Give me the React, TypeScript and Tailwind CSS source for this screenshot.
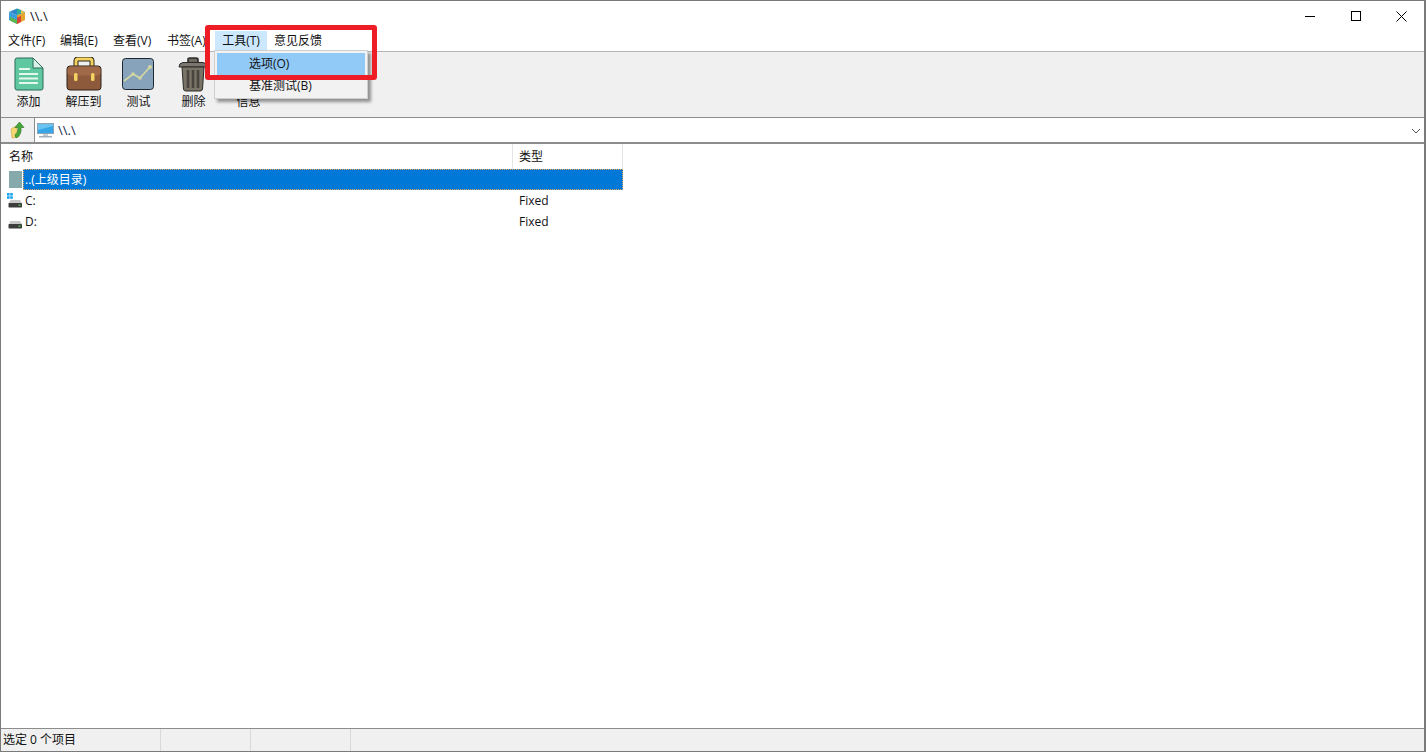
import React from "react";

const font = { fontFamily: '"Open Sans", "Noto Sans CJK SC", sans-serif' };

function AppIcon() {
  return (
    <svg width="18" height="18" viewBox="0 0 18 18">
      <path d="M1 5 L9 8 L9 17 L1 13 Z" fill="#3aa0dc" />
      <path d="M9 8 L17 5 L17 13 L9 17 Z" fill="#e3a52f" />
      <path d="M1 5 L9 1.5 L17 5 L9 8 Z" fill="#2f86c9" />
      <path d="M2 10 L9 13 L9 17 L2 13.5 Z" fill="#5bb84a" />
      <path d="M9 10.5 L13 9 L13 15 L9 17 Z" fill="#d9453b" />
      <path d="M9 1.5 L13 3 L13 6.5 L9 8 Z" fill="#2faf9a" />
      <path d="M13 3.2 L17 5 L13 6.5 Z" fill="#f1c94e" />
    </svg>
  );
}

function DocIcon() {
  return (
    <svg width="30" height="34" viewBox="0 0 30 34">
      <path d="M1 3 Q1 1 3 1 L19 1 L29 11 L29 31 Q29 33 27 33 L3 33 Q1 33 1 31 Z" fill="#5fc8a0" stroke="#2c6b5b" strokeWidth="1" />
      <path d="M19 1 L19 11 L29 11 Z" fill="#d7f1e6" stroke="#2c6b5b" strokeWidth="1" />
      <path d="M5 12 H16 M5 17 H24 M5 21.5 H24 M5 26 H24" stroke="#e4f7ee" strokeWidth="2" />
    </svg>
  );
}

function CaseIcon() {
  return (
    <svg width="36" height="34" viewBox="0 0 36 34">
      <path d="M10 11 V4 Q10 2 12 2 H24 Q26 2 26 4 V11" fill="none" stroke="#2a2418" strokeWidth="5" />
      <path d="M10 11 V4 Q10 2 12 2 H24 Q26 2 26 4 V11" fill="none" stroke="#f4d25f" strokeWidth="3" />
      <rect x="1" y="9" width="34" height="24" rx="3" fill="#8d5a3c" stroke="#2f2118" />
      <rect x="1.5" y="9.5" width="33" height="9" rx="3" fill="#a06a48" />
      <rect x="8" y="16" width="3.5" height="8" rx="1.5" fill="#f4d25f" />
      <rect x="25" y="16" width="3.5" height="8" rx="1.5" fill="#f4d25f" />
    </svg>
  );
}

function ChartIcon() {
  return (
    <svg width="32" height="32" viewBox="0 0 32 32" className="-ml-[2px]">
      <rect x="0.5" y="0.5" width="31" height="31" rx="3" fill="#86a3bb" stroke="#1f2933" />
      <path d="M2 23 L11 16 L18 20 L28 9" fill="none" stroke="#d3d6a2" strokeWidth="1.7" />
      <circle cx="11" cy="16" r="1.8" fill="#d3d6a2" />
      <circle cx="18" cy="20" r="1.8" fill="#d3d6a2" />
      <circle cx="28" cy="9" r="2" fill="#d3d6a2" />
    </svg>
  );
}

function TrashIcon() {
  return (
    <svg width="30" height="35" viewBox="0 0 30 35" className="-ml-[2px]">
      <path d="M10 5 V2.5 Q10 1 12 1 H18 Q20 1 20 2.5 V5" fill="#6e6a62" stroke="#2b2a27" strokeWidth="1.6" />
      <path d="M1 10 Q1 6 5 5.5 H25 Q29 6 29 10 Z" fill="#7b7770" stroke="#2b2a27" />
      <path d="M4 10 H26 L24.5 32 Q24.4 34 22 34 H8 Q5.6 34 5.5 32 Z" fill="#7a7468" stroke="#2b2a27" />
      <path d="M10 13 V31 M15 13 V31 M20 13 V31" stroke="#48453e" strokeWidth="2.6" />
    </svg>
  );
}

function UpIcon() {
  return (
    <svg width="15" height="18" viewBox="0 0 15 18">
      <path d="M1 8 L6 5 L9 16 L2 17 Z" fill="#f4d675" stroke="#c9a544" strokeWidth="0.6" />
      <path d="M6 17 Q12 14 11 6.5 L14 6.5 L9.5 1 L5 6.5 L8 6.5 Q8.5 11 5 14 Z" fill="#45a83a" stroke="#24701f" strokeWidth="0.6" />
    </svg>
  );
}

function MonitorIcon() {
  return (
    <svg width="17" height="15" viewBox="0 0 17 15">
      <rect x="0.5" y="0.5" width="16" height="10" fill="#35a7e8" stroke="#8aa4b5" />
      <path d="M1 1 H16 V3 L1 7 Z" fill="#6bc4f0" />
      <rect x="6" y="11" width="5" height="2" fill="#c3ccd2" />
      <rect x="2" y="13" width="13" height="1.5" fill="#9fb0ba" />
    </svg>
  );
}

function DriveIcon({ win }: { win?: boolean }) {
  return (
    <svg width="16" height="16" viewBox="0 0 16 16" className="shrink-0">
      {win && (
        <g fill="#18a5ee">
          <rect x="0" y="0" width="2.6" height="2.6" />
          <rect x="3.2" y="0" width="2.6" height="2.6" />
          <rect x="0" y="3.2" width="2.6" height="2.6" />
          <rect x="3.2" y="3.2" width="2.6" height="2.6" />
        </g>
      )}
      <path d="M2 10 L3.5 7 H13 L15 10 Z" fill="#c8c8c8" />
      <rect x="1.5" y="10" width="13.5" height="4.5" rx="0.7" fill="#3c3c3c" />
      <rect x="11.5" y="11.5" width="2" height="1.3" fill="#55cf55" />
    </svg>
  );
}

const menus = [
  { label: "文件(F)", w: "w-[52px]" },
  { label: "编辑(E)", w: "w-[53px]" },
  { label: "查看(V)", w: "w-[54px]" },
  { label: "书签(A)", w: "w-[48px]" },
];

const tools = [
  { label: "添加", icon: <DocIcon /> },
  { label: "解压到", icon: <CaseIcon /> },
  { label: "测试", icon: <ChartIcon /> },
  { label: "删除", icon: <TrashIcon /> },
  { label: "信息", icon: null },
];

export default function App() {
  return (
    <div
      style={font}
      className="relative w-[1426px] h-[752px] overflow-hidden flex flex-col bg-white border border-[#7a7a7a] border-r-2 text-[12px] leading-none text-[#111]"
    >
      {/* title bar */}
      <div className="h-[30px] flex items-center shrink-0 pl-[7px]">
        <AppIcon />
        <span className="ml-[4px] text-[13px]">\\.\</span>
        <div className="ml-auto flex items-center h-full">
          <div className="w-[46px] flex justify-center pl-[1px]">
            <div className="w-[10px] h-px bg-black" />
          </div>
          <div className="w-[46px] flex justify-center pl-[1px]">
            <div className="w-[10px] h-[10px] border border-black" />
          </div>
          <div className="w-[46px] flex justify-center">
            <svg width="11" height="11" viewBox="0 0 11 11">
              <path d="M0.5 0.5 L10.5 10.5 M10.5 0.5 L0.5 10.5" stroke="#000" strokeWidth="1" />
            </svg>
          </div>
        </div>
      </div>

      {/* menu bar */}
      <div className="h-[21px] flex shrink-0 items-start pl-[7px] border-b border-[#b5b5b5]">
        {menus.map((m) => (
          <div key={m.label} className={`${m.w} h-[19px] flex items-center whitespace-nowrap`}>
            {m.label}
          </div>
        ))}
        <div className="w-[52px] h-[19px] flex items-center justify-center bg-[#cce8ff]">工具(T)</div>
        <div className="h-[19px] flex items-center ml-[7px]">意见反馈</div>
      </div>

      {/* toolbar */}
      <div className="h-[66px] shrink-0 flex bg-[#f0f0f0] border-b border-[#8c8c8c] pt-[4px]">
        {tools.map((t) => (
          <div key={t.label} className="w-[55px] flex flex-col items-center">
            <div className="h-[36px] flex items-center justify-center">{t.icon}</div>
            <div className="mt-[4px]">{t.label}</div>
          </div>
        ))}
      </div>

      {/* address bar */}
      <div className="h-[26px] shrink-0 flex bg-[#f0f0f0] border-b-2 border-[#8c8c8c]">
        <div className="w-[33px] flex items-center justify-center">
          <UpIcon />
        </div>
        <div className="flex-1 flex items-center bg-white border-l border-[#8c8c8c] pt-[1px]">
          <div className="ml-[2px] flex">
            <MonitorIcon />
          </div>
          <span className="ml-[4px] text-[13px] text-[#16264a]">\\.\</span>
          <svg className="ml-auto mr-[3px]" width="10" height="6" viewBox="0 0 10 6">
            <path d="M1 1 L5 5 L9 1" fill="none" stroke="#555" />
          </svg>
        </div>
      </div>

      {/* list */}
      <div className="flex-1 min-h-0 flex flex-col">
        <div className="h-[25px] flex shrink-0">
          <div className="w-[511px] flex items-center pl-[8px]">名称</div>
          <div className="w-[111px] flex items-center pl-[6px] border-x border-[#e5e5e5]">类型</div>
        </div>
        <div className="h-[21px] flex items-center">
          <div className="w-[22px] h-full flex items-center justify-end pr-[1px]">
            <div className="w-[13px] h-[17px] bg-[#86a9ab]" />
          </div>
          <div className="w-[600px] h-full flex items-center pl-[1px] bg-[#0078d7] text-white border border-dotted border-[#e8a860]">
            ..(上级目录)
          </div>
        </div>
        {[
          { name: "C:", win: true },
          { name: "D:", win: false },
        ].map((r) => (
          <div key={r.name} className="h-[21px] flex items-center">
            <div className="w-[511px] flex items-center pl-[6px]">
              <DriveIcon win={r.win} />
              <span className="ml-[2px]">{r.name}</span>
            </div>
            <div className="pl-[7px]">Fixed</div>
          </div>
        ))}
      </div>

      {/* status bar */}
      <div className="h-[23px] shrink-0 flex bg-[#f0f0f0] border-t border-[#8c8c8c]">
        <div className="w-[160px] flex items-center pl-[2px] border-r border-[#d9d9d9]">选定 0 个项目</div>
        <div className="w-[90px] border-r border-[#d9d9d9]" />
        <div className="w-[100px] border-r border-[#d9d9d9]" />
      </div>

      {/* dropdown menu */}
      <div className="absolute left-[213px] top-[49px] w-[154px] h-[49px] bg-[#f2f2f2] border border-[#cfcfcf] shadow-[3px_3px_3px_rgba(0,0,0,0.4)] p-[2px]">
        <div className="h-[22px] flex items-center pl-[32px] bg-[#91c9f7]">选项(O)</div>
        <div className="h-[22px] flex items-center pl-[32px]">基准测试(B)</div>
      </div>

      {/* red annotation */}
      <div className="absolute left-[204px] top-[24px] w-[172px] h-[55px] border-[5px] border-[#ee1c25] rounded-[3px]" />
    </div>
  );
}
